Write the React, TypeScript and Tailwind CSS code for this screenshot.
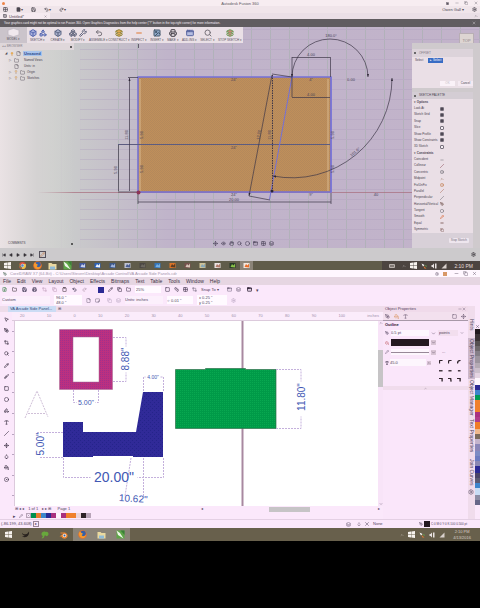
import { useState, type ReactNode } from "react";
import clsx from "clsx";
import {
  AppWindow,
  Box,
  Boxes,
  Brush,
  ChevronDown,
  ChevronUp,
  Circle,
  CircleDot,
  Clipboard,
  Copy,
  Crop,
  Droplet,
  Equal,
  Eye,
  File,
  FilePlus,
  Folder,
  Grid2x2,
  Hand,
  Image,
  Layers,
  Lightbulb,
  Minus,
  MousePointer2,
  Move,
  PaintBucket,
  PenTool,
  Pencil,
  Play,
  Printer,
  Redo2,
  Ruler,
  Save,
  Search,
  Settings,
  Shapes,
  SkipBack,
  SkipForward,
  Slash,
  Square,
  Type,
  Undo2,
  Wrench,
  X,
  type LucideIcon,
} from "lucide-react";

type Tool = { label: string; width: string; icons: LucideIcon[]; color: string };

const RIBBON: Tool[] = [
  { label: "SKETCH", width: "w-[21px]", icons: [Box, Shapes], color: "text-[#5668b0] fill-[#a8b0dc]" },
  { label: "CREATE", width: "w-[20px]", icons: [Box], color: "text-[#5c6684] fill-[#a8b0cc]" },
  { label: "MODIFY", width: "w-[20px]", icons: [Boxes, Wrench], color: "text-[#666a80]" },
  { label: "ASSEMBLE", width: "w-[21px]", icons: [Undo2], color: "text-[#77727a]" },
  { label: "CONSTRUCT", width: "w-[20px]", icons: [Layers], color: "text-[#8a8138] fill-[#e0a850]" },
  { label: "INSPECT", width: "w-[20px]", icons: [Minus], color: "text-[#e07830]" },
  { label: "INSERT", width: "w-[16px]", icons: [Image], color: "text-[#42566a] fill-[#90a8c8]" },
  { label: "MAKE", width: "w-[16px]", icons: [Printer], color: "text-[#444048]" },
  { label: "ADD-INS", width: "w-[17px]", icons: [AppWindow], color: "text-[#5a66a0] fill-[#b4bce0]" },
  { label: "SELECT", width: "w-[19px]", icons: [Search], color: "text-[#77727a]" },
  { label: "STOP SKETCH", width: "w-[26px]", icons: [Layers], color: "text-[#6a9e58] fill-[#c88878]" },
];

const OPTIONS = [
  { label: "Look At", on: true },
  { label: "Sketch Grid", on: true },
  { label: "Snap", on: true },
  { label: "Slice", on: false },
  { label: "Show Profile", on: true },
  { label: "Show Constraints", on: true },
  { label: "3D Sketch", on: false },
];

const CONSTRAINTS: { label: string; icon: LucideIcon; color: string }[] = [
  { label: "Coincident", icon: Minus, color: "text-[#6b6870]" },
  { label: "Collinear", icon: Slash, color: "text-[#8a4a58]" },
  { label: "Concentric", icon: CircleDot, color: "text-[#6b6870]" },
  { label: "Midpoint", icon: ChevronUp, color: "text-[#8a6a58]" },
  { label: "Fix/UnFix", icon: CircleDot, color: "text-[#c07848]" },
  { label: "Parallel", icon: Slash, color: "text-[#a86a58]" },
  { label: "Perpendicular", icon: Slash, color: "text-[#6b6870]" },
  { label: "Horizontal/Vertical", icon: PenTool, color: "text-[#806460]" },
  { label: "Tangent", icon: Circle, color: "text-[#6b6870]" },
  { label: "Smooth", icon: Pencil, color: "text-[#d8602c]" },
  { label: "Equal", icon: Equal, color: "text-[#8a6a68]" },
  { label: "Symmetric", icon: Copy, color: "text-[#8a6a68]" },
];

const TREE: { label: string; icon: LucideIcon; bulb: boolean; arrow: boolean }[] = [
  { label: "Named Views", icon: Folder, bulb: false, arrow: true },
  { label: "Units: in", icon: File, bulb: false, arrow: false },
  { label: "Origin", icon: Folder, bulb: true, arrow: true },
  { label: "Sketches", icon: Folder, bulb: true, arrow: true },
];

const MENUS = ["File", "Edit", "View", "Layout", "Object", "Effects", "Bitmaps", "Text", "Table", "Tools", "Window", "Help"];

const STANDARD_BAR: { icon: LucideIcon; color: string }[] = [
  { icon: FilePlus, color: "text-[#4f8a5c]" },
  { icon: Folder, color: "text-[#4a4048]" },
  { icon: Save, color: "text-[#3c3450]" },
  { icon: Printer, color: "text-[#3c3450]" },
  { icon: Crop, color: "text-[#c8a8c4]" },
  { icon: Copy, color: "text-[#c8a8c4]" },
  { icon: Clipboard, color: "text-[#50404c]" },
  { icon: Undo2, color: "text-[#3c3450]" },
  { icon: Redo2, color: "text-[#b8a0b4]" },
];

const TOOLBOX: LucideIcon[] = [
  MousePointer2, PenTool, Crop, Search, Pencil, Brush, Square, Circle, Shapes, Type, Slash, Move, Droplet, PaintBucket, CircleDot,
];

const PALETTE = [
  "bg-[#008f50]", "bg-[#e87b2e]", "bg-[#3d85cc]", "bg-[#2b2a94]", "bg-[#a93080]", "bg-[#fdf3fd]", "bg-[#a93080]",
  "bg-[#f0802c]", "bg-[#f0802c]", "bg-[#ead4dc]", "bg-[#2c2226]", "bg-[#b8a4b8]",
];

const SIDE_PALETTE = [
  "bg-[#221a1e]", "bg-[#3c3436]", "bg-[#565052]", "bg-[#6e686c]", "bg-[#857f88]", "bg-[#9c949e]", "bg-[#b4aab4]", "bg-[#ccc0cc]",
  "bg-[#e4d4e2]", "bg-[#fdf6fd]", "bg-[#2b2a94]", "bg-[#3d85cc]", "bg-[#009a56]", "bg-[#f0802c]", "bg-[#f0802c]", "bg-[#a93080]",
  "bg-[#b03c8a]", "bg-[#f07c28]", "bg-[#efb88c]", "bg-[#7c6a5a]", "bg-[#c4b4cc]", "bg-[#8a86b8]", "bg-[#7c8cc4]", "bg-[#6c7cc0]",
  "bg-[#8a88b4]", "bg-[#2b2a94]", "bg-[#4a4468]", "bg-[#5a5a74]", "bg-[#3d85cc]", "bg-[#c8dcf4]", "bg-[#8c8ca4]", "bg-[#666688]",
];

const DOCKERS = [
  { label: "Hints", height: "h-[26px]" },
  { label: "Object Properties", height: "h-[41px]" },
  { label: "Object Manager", height: "h-[38px]" },
  { label: "Text Properties", height: "h-[38px]" },
  { label: "Join Curves", height: "h-[34px]" },
];

function WindowsLogo() {
  return (
    <svg viewBox="0 0 14 14" className="size-[7px]" fill="#f6f2ee">
      <path d="M0 2l6-1v5.6H0zM6.8.9L14 0v6.6H6.8zM0 7.4h6V13l-6-1zM6.8 7.4H14V14l-7.2-1z" />
    </svg>
  );
}

function Chrome() {
  return (
    <svg viewBox="0 0 14 14" className="size-[7px]">
      <circle cx="7" cy="7" r="7" fill="#d9503c" />
      <path d="M1 4l5 9A7 7 0 0 1 1 4z" fill="#4c9a52" />
      <path d="M7 4h6.4A7 7 0 0 1 6 14z" fill="#e8c048" />
      <circle cx="7" cy="7" r="3" fill="#5088d0" stroke="#eee" />
    </svg>
  );
}

function Firefox() {
  return (
    <svg viewBox="0 0 18 18" className="size-[9px]">
      <circle cx="9" cy="9" r="8.500" fill="#e8702a" />
      <circle cx="10" cy="7" r="5.500" fill="#3560a8" />
      <path d="M2 5c2-2 4-1 5 1 2 0 3 1 2 3-2 0-2 2 0 3 3 1 5 0 7-3-1 6-5 8-8 7C3 15 1 10 2 5z" fill="#f49a30" />
    </svg>
  );
}

function FolderTile() {
  return (
    <svg viewBox="0 0 18 16" className="h-[8px] w-[9px]">
      <path d="M1 2h6l2 2h8v11H1z" fill="#ead9a0" />
      <path d="M4 9h10v6H4z" fill="#92bcd8" />
    </svg>
  );
}

function CorelIcon() {
  return (
    <svg viewBox="0 0 18 18" className="size-[9px]">
      <path d="M1 1h16v16H1z" fill="#5ea648" />
      <path d="M1 1l7 5 7 11L4 10z" fill="#eef6e8" />
      <path d="M9 1h8v9z" fill="#3b7f38" />
    </svg>
  );
}

function BlenderIcon() {
  return (
    <svg viewBox="0 0 18 16" className="h-[8px] w-[9px]">
      <path d="M1 11l8-6H3V3h9c4 2 6 5 5 8s-4 5-8 4-4-4-4-4z" fill="#ec8430" />
      <circle cx="11" cy="9" r="3.500" fill="#eee" />
      <circle cx="11" cy="9" r="2" fill="#34609c" />
    </svg>
  );
}

function Tile({ a, b }: { a: string; b: string }) {
  return (
    <svg viewBox="0 0 14 14" className="size-[7px]">
      <path d="M1 2h12v10H1z" fill={a} />
      <path d="M3 10l3-6 3 3 3-4v8z" fill={b} />
    </svg>
  );
}

function TaskButton({ label, active, className, children }: { label: string; active?: boolean; className: string; children: ReactNode }) {
  return (
    <button aria-label={label} className={clsx("flex h-full items-center justify-center", className, active && "bg-[#8b8478]")}>
      {children}
    </button>
  );
}

function Tray() {
  return (
    <div className="flex items-center gap-[4px] text-[#f4eeee]">
      <ChevronUp className="size-[4px]" />
      <WindowsLogo />
      <svg viewBox="0 0 12 12" className="size-[6px]">
        <path d="M1 1l6 3-3 3z" fill="#fff" />
        <path d="M5 6l6 5H7z" fill="#e87b2e" />
        <path d="M7 5h4v3z" fill="#6ab04c" />
      </svg>
      <svg viewBox="0 0 12 12" className="size-[6px]" fill="#e8e2e2">
        <path d="M1 4h2l3-3v10L3 8H1zM8 1h3v10H8z" />
      </svg>
      <svg viewBox="0 0 12 12" className="size-[6px]" fill="#d8d0cc">
        <path d="M1 11L11 1v10z" />
      </svg>
    </div>
  );
}

function SketchView() {
  const verticals = Array.from({ length: 25 }, (_, i) => 42 + i * 19);
  const rows = Array.from({ length: 24 }, (_, i) => 29 + i * 10);
  return (
    <svg
      viewBox="0 27 480 221"
      preserveAspectRatio="xMidYMid slice"
      className="absolute inset-0 h-full w-full"
      fontFamily="Liberation Sans, sans-serif"
      fontSize="4"
      fill="#4a4258"
    >
      <defs>
        <linearGradient id="haze" x1="0" x2="1">
          <stop offset="0" stopColor="#dcd8d8" />
          <stop offset="0.100" stopColor="#ccd0cc" />
          <stop offset="0.220" stopColor="#c6c2ca" />
          <stop offset="0.350" stopColor="#c0b4ca" />
          <stop offset="1" stopColor="#c2b3ca" />
        </linearGradient>
        <pattern id="tan" width="2" height="2" patternUnits="userSpaceOnUse">
          <path d="M0 0h2v2H0z" fill="#c08f5a" />
          <path d="M0 0h1v1H0zM1 1h1v1H1z" fill="#b4895c" />
        </pattern>
        <marker id="tip" viewBox="0 0 6 4" refX="6" refY="2" markerWidth="5" markerHeight="3" orient="auto-start-reverse">
          <path d="M0 0l6 2-6 2z" fill="#2c2634" />
        </marker>
      </defs>
      <rect y="27" width="480" height="221" fill="url(#haze)" />
      <g strokeWidth="1" opacity="0.350">
        {verticals.map((x) => (
          <path key={x} d={`M${x + 0.5} 27v221`} stroke={x < 110 ? "#c8c4cc" : "#94b09a"} />
        ))}
        {rows.map((y) => (
          <path key={y} d={`M80 ${y + 0.5}h400`} stroke="#ae9fbe" />
        ))}
      </g>
      <path d="M0 192.500h480" stroke="#a86c7c" strokeWidth="1" opacity="0.700" />
      <path d="M138 77h193v115H138z" fill="url(#tan)" stroke="#7470d8" strokeWidth="1.500" />
      <path d="M140 79v112M328 79v112" stroke="#d8b78c" strokeWidth="1" />
      <path d="M118 144.500h212" stroke="#5c5c80" strokeWidth="1" />
      <path d="M292 77L269.500 199.500M331 77v115" stroke="#7470d8" strokeWidth="1" fill="none" />
      <g stroke="#3e3648" strokeWidth="0.700" fill="none">
        <path d="M128 77.500h10M118 192h20M292 57v40M330.500 57v20M272 74l20 3M249 196l21 4" />
        <path d="M129.500 78v113M118.500 145v46M138 202h193M292 57.500h38M292 97.500h38M272 75l-23 121" markerStart="url(#tip)" markerEnd="url(#tip)" />
        <path d="M272.500 75v117" strokeWidth="1" strokeDasharray="1.500 1" />
        <path d="M292 77a38 38 0 0 1 76 0" markerStart="url(#tip)" markerEnd="url(#tip)" />
        <path d="M273 176a100 100 0 0 0 119-98" markerStart="url(#tip)" markerEnd="url(#tip)" />
        <path d="M138 193v11M331 193v11M138.500 44v4" />
      </g>
      <g textAnchor="middle">
        <text x="331" y="37">180.0°</text>
        <text x="311" y="56">4.00</text>
        <text x="311" y="96">4.00</text>
        <text x="234" y="81">24"</text>
        <text x="311" y="81">4"</text>
        <text x="351" y="81">0.00</text>
        <text x="234" y="149">24"</text>
        <text x="234" y="196">24"</text>
        <text x="234" y="201">20.00</text>
        <text x="311" y="196">9"</text>
        <text x="376" y="196">40</text>
        <text x="128" y="135" transform="rotate(-90 128 135)">11.80</text>
        <text x="117" y="170" transform="rotate(-90 117 170)">5.90</text>
        <text x="143" y="135" transform="rotate(-90 143 135)">5.90</text>
        <text x="143" y="169" transform="rotate(-90 143 169)">5.90</text>
        <text x="334" y="135" transform="rotate(-90 334 135)">5.90</text>
        <text x="334" y="169" transform="rotate(-90 334 169)">5.90</text>
        <text x="260" y="135" transform="rotate(-80 260 135)">12.00</text>
        <text x="271" y="135" transform="rotate(-90 271 135)">11.80</text>
        <text x="356" y="153" transform="rotate(-40 356 153)">101.6°</text>
      </g>
      <circle cx="138.500" cy="192.500" r="2" fill="#8c3458" />
      <circle cx="272" cy="191" r="1.500" fill="#2c2634" />
    </svg>
  );
}

function SketchPalette() {
  const [options, setOptions] = useState(OPTIONS);

  const toggle = (label: string) => {
    setOptions((prev) => prev.map((o) => (o.label === label ? { ...o, on: !o.on } : o)));
  };

  return (
    <section className="mt-[4px] flex flex-1 flex-col bg-[#eadfe6] text-[#48424e]">
      <h2 className="flex h-[7px] items-center gap-[3px] bg-[#d4cdd4] px-[2px]">
        <span className="size-[2px] rounded-full bg-[#444]" />
        SKETCH PALETTE
      </h2>
      <div className="flex flex-1 flex-col px-[2px]">
        <h3 className="flex flex-1 items-center font-bold">▾ Options</h3>
        {options.map((o) => (
          <label key={o.label} className="flex flex-1 items-center">
            <span className="w-[26px] whitespace-nowrap">{o.label}</span>
            <input
              type="checkbox"
              checked={o.on}
              onChange={() => toggle(o.label)}
              className="size-[4px] appearance-none rounded-[1px] border border-[#77717c] bg-[#f4eef4] checked:bg-[#4e4854]"
            />
          </label>
        ))}
        <h3 className="flex flex-1 items-center font-bold">▾ Constraints</h3>
        {CONSTRAINTS.map(({ label, icon: Icon, color }) => (
          <button key={label} className="flex flex-1 items-center text-left">
            <span className="w-[26px] whitespace-nowrap">{label}</span>
            <Icon className={clsx("size-[4px]", color)} strokeWidth={3} />
          </button>
        ))}
      </div>
      <div className="flex h-[15px] items-center justify-end bg-[#d8d0d8] px-[4px]">
        <button className="rounded-[1px] bg-[#eee6ee] px-[2px] text-[#77707c]">Stop Sketch</button>
      </div>
    </section>
  );
}

function FusionWindow() {
  return (
    <section className="flex flex-col font-['Liberation_Sans',sans-serif] text-[4px] leading-[5px]">
      <header className="flex h-[6px] items-center bg-[#f7edf1] text-[#5c5660]">
        <div className="w-[36px] px-[2px]">
          <span className="block size-[3px] rounded-full bg-[#ee8448]" />
        </div>
        <h1 className="flex-1 text-center">Autodesk Fusion 360</h1>
        <div className="flex w-[36px] items-center justify-between px-[2px]">
          <Square className="size-[3px] fill-current" />
          <Minus className="size-[4px]" />
          <Copy className="size-[4px]" />
          <X className="size-[4px]" />
        </div>
      </header>
      <div className="flex h-[7px] items-center gap-[8px] bg-[#f0e5ea] px-[3px] text-[#4b4650]">
        <Grid2x2 className="size-[5px]" strokeWidth={3} />
        <span className="flex items-center">
          <File className="size-[5px] fill-current" />▾
        </span>
        <Save className="size-[5px]" strokeWidth={3} />
        <span className="flex items-center">
          <Undo2 className="size-[5px]" strokeWidth={3} />▾
        </span>
        <span className="flex items-center">
          <Redo2 className="size-[5px]" strokeWidth={3} />▾
        </span>
        <button className="ml-auto">Owen Gall ▾</button>
        <Settings className="size-[5px]" strokeWidth={3} />
      </div>
      <div className="flex h-[6px] items-center bg-[#eadfe6] text-[#4b4650]">
        <div className="flex h-full w-[50px] items-center gap-[2px] bg-[#f5eaf0] px-[3px]">
          <Grid2x2 className="size-[4px]" strokeWidth={3} />
          Untitled*
          <X className="ml-auto size-[3px]" />
        </div>
        <ChevronUp className="mr-[2px] ml-auto size-[4px]" />
      </div>
      <p className="flex h-[8px] items-center justify-between overflow-hidden bg-[#605c60] px-[4px] text-[3px] whitespace-nowrap text-[#f4ecf4]">
        Your graphics card might not be optimal to run Fusion 360. Open Graphics Diagnostics from the help center (&quot;?&quot; button in the top-right corner) for more information.
        <X className="size-[4px]" />
      </p>

      <div className="relative flex h-[221px] flex-col overflow-hidden">
        <SketchView />
        <nav className="relative flex h-[16px] w-[243px] bg-[#eae0e6] text-[#55505c]">
          <button className="flex w-[27px] flex-col items-center justify-between bg-[#cbc4cb] py-px">
            <svg viewBox="0 0 28 20" className="h-[9px] w-[13px]">
              <path d="M2 5l12-4 12 4v10l-12 4-12-4z" fill="#f0e8ee" stroke="#b4acb8" />
            </svg>
            <span className="text-[3px] leading-[5px]">MODEL ▾</span>
          </button>
          {RIBBON.map((t) => (
            <button key={t.label} className={clsx("flex flex-col items-center justify-between pt-[2px] whitespace-nowrap", t.width)}>
              <span className="flex gap-[2px]">
                {t.icons.map((Icon, i) => (
                  <Icon key={i} className={clsx("size-[8px]", t.color)} strokeWidth={3} />
                ))}
              </span>
              <span className="text-[3px] leading-[5px]">{t.label} ▾</span>
            </button>
          ))}
        </nav>
        <button className="absolute top-[6px] right-[6px] h-[14px] w-[15px] border border-[#b8aeb4] bg-[#ddd5d2] text-[#8c8488]">TOP</button>

        <div className="relative flex flex-1 justify-between">
          <aside className="flex w-[74px] flex-col bg-linear-to-r from-[#eae2e4] via-[#d4d2d2] to-[#cccacc]/0 text-[3px] text-[#48424e]">
            <h2 className="flex h-[7px] items-center gap-[3px] bg-[#dfd7da] px-[2px] text-[#847d88]">
              ◂◂ BROWSER
              <span className="ml-auto size-[2px] rounded-full bg-[#333]" />
            </h2>
            <ul>
              <li className="flex h-[7px] items-center gap-[2px] pl-[5px]">
                <span className="w-[3px]">◢</span>
                <Lightbulb className="size-[4px] fill-[#ecae50] text-[#d89848]" />
                <File className="size-[5px]" />
                <span className="bg-[#a8c4ec] px-px text-[4px] font-bold text-[#284888]">Unsaved</span>
              </li>
              {TREE.map((t) => (
                <li key={t.label} className="flex h-[6px] items-center gap-[2px] pl-[9px]">
                  <span className="w-[3px]">{t.arrow && "▷"}</span>
                  {t.bulb && <Lightbulb className="size-[4px] fill-[#ecc890] text-[#b09080]" />}
                  <t.icon className="size-[5px]" />
                  <span className={clsx(!t.bulb && "pl-[3px]")}>{t.label}</span>
                </li>
              ))}
            </ul>
            <p className="mt-auto flex h-[9px] items-center justify-between pr-px pl-[8px]">
              COMMENTS
              <span className="size-[2px] rounded-full bg-[#333]" />
            </p>
          </aside>

          <div className="flex items-end gap-[3px] pb-[2px] text-[#514a60]">
            {[Move, Eye, Hand, Search, Circle, AppWindow, Grid2x2, Layers].map((Icon, i) => (
              <Icon key={i} className="size-[5px]" strokeWidth={3} />
            ))}
          </div>

          <aside className="flex w-[68px] flex-col bg-[#cfcacd] pt-[6px] pr-[7px] text-[3px]">
            <section className="flex h-[39px] flex-col bg-[#eadfe6] text-[#48424e]">
              <h2 className="flex h-[8px] items-center gap-[3px] bg-[#dcd3da] px-[2px] text-[#807884]">
                <span className="size-[2px] rounded-full bg-[#444]" />
                OFFSET
              </h2>
              <div className="flex items-center gap-[5px] px-[3px] pt-px">
                <span>Select</span>
                <button className="flex h-[5px] w-[15px] items-center justify-center bg-[#386cc4] text-white">▸ Select</button>
              </div>
              <div className="mt-auto flex justify-end gap-[3px] pb-[2px]">
                <button className="w-[15px] bg-[#faf2f8] text-[#c4bcc4]">OK</button>
                <button className="w-[15px] bg-[#f4eaf2]">Cancel</button>
              </div>
            </section>
            <SketchPalette />
          </aside>
        </div>
      </div>

      <footer className="flex h-[13px] items-center gap-[3px] bg-[#cccacc] px-[2px] text-[#38343a]">
        <SkipBack className="size-[4px] fill-current" />
        <Play className="size-[4px] rotate-180 fill-current" />
        <Play className="size-[4px] fill-current" />
        <Play className="size-[4px] fill-current" />
        <SkipForward className="size-[4px] fill-current" />
        <span className="ml-[2px] flex size-[7px] items-center justify-center border border-[#55505a]">
          <Pencil className="size-[5px] text-[#c87840]" />
        </span>
        <Settings className="mr-[2px] ml-auto size-[5px]" strokeWidth={3} />
      </footer>
    </section>
  );
}

const TASKS: { label: string; icon: ReactNode }[] = [
  { label: "Start", icon: <WindowsLogo /> },
  { label: "Chrome", icon: <Chrome /> },
  { label: "Firefox", icon: <Firefox /> },
  { label: "Explorer", icon: <FolderTile /> },
  { label: "CorelDRAW", icon: <CorelIcon /> },
  { label: "Mail", icon: <Tile a="#4058a0" b="#c8d0ec" /> },
  { label: "Store", icon: <Tile a="#2c60b4" b="#eef4fc" /> },
  { label: "Word", icon: <Tile a="#3c5888" b="#a0b4dc" /> },
  { label: "Photos", icon: <Tile a="#c0c4d4" b="#485c90" /> },
  { label: "Terminal", icon: <Tile a="#4c4844" b="#6c6860" /> },
  { label: "Outlook", icon: <Tile a="#3474b8" b="#78b0e0" /> },
  { label: "Blender", icon: <Tile a="#dc7428" b="#5c3c24" /> },
  { label: "Player", icon: <Tile a="#74504c" b="#d8c4b8" /> },
  { label: "Notes", icon: <Tile a="#d0c498" b="#88a8b8" /> },
  { label: "Paint", icon: <Tile a="#ece4e4" b="#b07868" /> },
  { label: "Excel", icon: <Tile a="#283828" b="#88c048" /> },
];

function TopTaskbar() {
  return (
    <div className="flex h-[9px] items-center bg-[#605c4a] font-['Liberation_Sans',sans-serif]">
      {TASKS.map((t) => (
        <TaskButton key={t.label} label={t.label} className="w-[15px]">
          {t.icon}
        </TaskButton>
      ))}
      <TaskButton label="Fusion 360" className="w-[13px]" active>
        <Tile a="#f2e8e0" b="#e86c28" />
      </TaskButton>
      <div className="ml-auto flex h-full items-center gap-[7px] bg-[#4c4440] px-[7px] text-[5px] leading-[6px] text-[#e8dfdc]">
        <svg viewBox="0 0 12 8" className="h-[4px] w-[6px]" fill="none" stroke="#b8b0ac" strokeWidth="2">
          <path d="M1 1h10v6H1zM1 4h10" />
        </svg>
        <Tray />
        2:10 PM
      </div>
    </div>
  );
}

function Drawing() {
  return (
    <svg
      viewBox="15 321 363 185"
      className="h-[185px] min-w-0 flex-1 bg-white"
      preserveAspectRatio="xMidYMid slice"
      fontFamily="Liberation Sans, sans-serif"
      fontSize="10"
      fill="#4258b4"
    >
      <defs>
        <pattern id="magenta" width="2" height="2" patternUnits="userSpaceOnUse">
          <path d="M0 0h2v2H0z" fill="#bc3080" />
          <path d="M0 0h1v1H0z" fill="#a0308c" />
        </pattern>
        <pattern id="navy" width="4" height="4" patternUnits="userSpaceOnUse">
          <path d="M0 0h4v4H0z" fill="#302a98" />
          <path d="M0 0h1v1H0zM2 2h1v1H2z" fill="#24248a" />
        </pattern>
        <pattern id="green" width="2" height="2" patternUnits="userSpaceOnUse">
          <path d="M0 0h2v2H0z" fill="#009a48" />
          <path d="M0 0h1v1H0z" fill="#08a850" />
        </pattern>
      </defs>
      <path d="M242.500 321v185" stroke="#a888a0" strokeWidth="2" />
      <path d="M59.500 329.500h53v60h-53zM73 337v45h26v-45z" fill="url(#magenta)" fillRule="evenodd" stroke="#a86890" strokeWidth="0.500" />
      <path d="M63 422h20v10h53l7-40h20v65h-30v-1H93v1H63z" fill="url(#navy)" />
      <path d="M175.500 369.500h30v-1h40v1h30.500v59H175.500z" fill="url(#green)" stroke="#30704c" strokeWidth="0.700" />
      <g stroke="#c4b0dc" strokeWidth="1" strokeDasharray="2 1" fill="none">
        <path d="M113 337.500h13v9M113 381.500h13v-9M73.500 390v12.500h3M98.500 390v12.500h-3" />
        <path d="M143.500 391v-14h2M163.500 391v-14h-3M63 432.500H37M63 457.500H40" />
        <path d="M63.500 458v19.500h27M163.500 458v19.500h-26M143.500 458v39M131 458l-6 38" />
        <path d="M276 369.500h25v12M276 428.500h25v-12" />
        <path d="M25 418l12-27 11 26M28 413.500h18" stroke="#d0c0d8" />
      </g>
      <g textAnchor="middle">
        <text x="129" y="359" transform="rotate(-90 129 359)">8.88&quot;</text>
        <text x="86" y="405" fontSize="7">5.00&quot;</text>
        <text x="153" y="379" fontSize="5">4.00&quot;</text>
        <text x="44" y="444" transform="rotate(-90 44 444)">5.00&quot;</text>
        <text x="114" y="482" fontSize="14">20.00&quot;</text>
        <text x="133" y="502" transform="rotate(4 133 502)">10.62&quot;</text>
        <text x="305" y="397" transform="rotate(-90 305 397)">11.80&quot;</text>
      </g>
    </svg>
  );
}

function ObjectProperties() {
  return (
    <aside className="flex w-[85px] flex-col bg-[#fae6fa] text-[4px] leading-[6px] text-[#50405a]">
      <h2 className="flex h-[6px] items-center bg-[#f0daea] px-[2px]">
        Object Properties
        <Minus className="ml-auto size-[4px]" />
        <X className="size-[4px]" />
      </h2>
      <div className="flex h-[9px] items-center gap-[4px] border-b border-[#a898a8] bg-[#f3e0ee] px-[2px]">
        <PenTool className="size-[5px]" />
        <PaintBucket className="size-[5px] text-[#d88848]" />
        <Type className="size-[5px]" />
        <Square className="ml-auto size-[5px]" />
        <Move className="size-[5px]" />
      </div>
      <h3 className="flex h-[7px] items-center px-[2px] font-bold text-[#2c2030]">Outline</h3>
      <div className="flex flex-col gap-[3px] px-[2px] pt-[2px]">
        <div className="flex items-center gap-[2px]">
          <PenTool className="size-[4px]" />
          <select aria-label="Width" className="h-[6px] w-[38px] appearance-none bg-[#fdf6fd]">
            <option>0.5 pt</option>
          </select>
          <ChevronDown className="size-[5px]" />
          <select aria-label="Units" className="h-[6px] w-[20px] appearance-none bg-[#f2deee] px-px">
            <option>points</option>
          </select>
          <ChevronDown className="size-[4px]" />
        </div>
        <div className="flex items-center gap-[2px]">
          <PaintBucket className="size-[4px] text-[#c05058]" />
          <button aria-label="Outline color" className="h-[7px] w-[38px] bg-[#241820]" />
          <ChevronDown className="size-[5px] bg-[#d8c4d4]" />
        </div>
        <div className="flex items-center gap-[2px]">
          <Pencil className="size-[4px]" />
          <button aria-label="Line style" className="flex h-[6px] w-[38px] items-center bg-[#fdf6fd]">
            <span className="h-px w-full bg-[#988898]" />
          </button>
          <ChevronDown className="size-[5px] bg-[#d8c4d4]" />
          <span className="pl-[4px]">...</span>
        </div>
      </div>
      <div className="flex items-start gap-[8px] px-[2px] pt-[4px]">
        <label className="flex items-center gap-px">
          <Type className="size-[4px]" strokeWidth={4} />
          <input aria-label="Miter limit" defaultValue="45.0" className="h-[7px] w-[36px] bg-[#fdf6fd]" />
          <ChevronUp className="size-[4px] bg-[#d8c4d4]" />
        </label>
        <div className="grid grid-cols-3 gap-x-[5px] gap-y-[5px] pt-px">
          {["M1 8V3q0-2 2-2h5", "M1 8V3l2-2h5", "M1 8q0-7 7-7", "M0 4h8", "M1 4h7", "M2 4h6", "M0 1h7v7", "M0 1h6l1 7", "M0 1h7v7"].map((d, i) => (
            <svg key={i} viewBox="0 0 9 9" className="size-[4px]" fill="none" stroke="#30242c" strokeWidth="3">
              <path d={d} />
            </svg>
          ))}
        </div>
      </div>
      <div className="mt-[4px] flex h-[4px] items-center justify-center bg-[#f0dcec]">
        <ChevronUp className="size-[3px]" />
      </div>
    </aside>
  );
}

function CorelWindow() {
  const [open, setOpen] = useState("Object Properties");

  return (
    <section className="flex flex-col bg-[#fbe8fb] font-['Liberation_Sans',sans-serif] text-[5px] leading-[6px] text-[#51445c]">
      <header className="flex h-[7px] items-center gap-[3px] bg-[#fff7ff] px-[3px] text-[4px] text-[#a494ac]">
        <PenTool className="size-[4px] text-[#446050]" />
        <h1>CorelDRAW X7 (64-Bit) - C:\Users\Steven\Desktop\Arcade Control\VA Arcade Side Panels.cdr</h1>
        <div className="ml-auto flex items-center gap-[4px] text-[#5c5064]">
          <Settings className="size-[4px]" />
          <span className="size-[4px] bg-[#d89868]" />
          <Minus className="ml-[3px] size-[5px]" />
          <Copy className="size-[5px]" />
          <X className="size-[5px]" />
        </div>
      </header>
      <nav className="flex h-[8px] items-center gap-[6px] bg-[#e6d6e2] px-[3px] text-[#3c3044]">
        {MENUS.map((m) => (
          <button key={m}>{m}</button>
        ))}
      </nav>
      <div className="flex h-[9px] items-center gap-[4px] px-[2px]">
        {STANDARD_BAR.map(({ icon: Icon, color }, i) => (
          <Icon key={i} className={clsx("mr-px size-[5px]", color)} strokeWidth={3} />
        ))}
        <span className="ml-[6px] size-[6px] bg-[#2b2a94]" />
        <Pencil className="size-[5px]" strokeWidth={3} />
        <Copy className="size-[5px]" strokeWidth={3} />
        <Folder className="size-[5px]" strokeWidth={3} />
        <select aria-label="Zoom" className="h-[7px] w-[26px] appearance-none bg-[#fffaff] px-px text-[4px]">
          <option>25%</option>
        </select>
        <Square className="size-[5px]" strokeWidth={3} />
        <Ruler className="size-[5px]" strokeWidth={3} />
        <Grid2x2 className="size-[5px]" strokeWidth={3} />
        <Crop className="size-[5px]" />
        <button className="text-[4px]">Snap To ▾</button>
        <AppWindow className="ml-[4px] size-[5px]" />
        <Layers className="size-[5px]" />
        <AppWindow className="ml-[2px] size-[5px] text-[#302438]" strokeWidth={4} />▾
      </div>
      <div className="flex h-[12px] items-center gap-[4px] px-[2px] text-[4px]">
        <select aria-label="Page size" className="h-[8px] w-[48px] appearance-none bg-[#fcf0fc]">
          <option>Custom</option>
        </select>
        <div className="flex w-[28px] flex-col bg-[#fffaff]">
          <input aria-label="Page width" defaultValue='96.0 "' className="h-[5px] w-full px-[2px]" />
          <input aria-label="Page height" defaultValue='48.0 "' className="h-[5px] w-full px-[2px]" />
        </div>
        <File className="size-[5px]" />
        <File className="size-[5px] rotate-90" />
        <Copy className="ml-[3px] size-[5px] text-[#b09cb8]" />
        <Layers className="size-[5px] text-[#b09cb8]" />
        <select aria-label="Drawing units" className="h-[8px] w-[38px] appearance-none bg-[#fcf0fc]">
          <option>Units: inches</option>
        </select>
        <input aria-label="Nudge" defaultValue='⟡ 0.01 "' className="h-[8px] w-[26px] bg-[#fffaff]" />
        <div className="flex w-[30px] flex-col bg-[#fffaff]">
          <input aria-label="Duplicate x" defaultValue='x 0.25 "' className="h-[5px] w-full px-[2px]" />
          <input aria-label="Duplicate y" defaultValue='y 0.25 "' className="h-[5px] w-full px-[2px]" />
        </div>
        <Settings className="size-[5px] text-[#b09cb8]" />
      </div>

      <div className="flex">
        <div className="flex min-w-0 flex-1 flex-col">
          <div className="flex h-[6px] items-center bg-[#eedcea] pl-[8px] text-[4px]">
            <div className="flex h-full w-[48px] items-center bg-[#ccdcf4] px-[2px] whitespace-nowrap text-[#304474]">VA Arcade Side Panel...</div>
            <span className="pl-[2px]">⊞</span>
          </div>
          <div className="flex">
            <nav className="flex w-[12px] flex-col items-center justify-between pt-[5px] pb-[30px] text-[#44384c]">
              {TOOLBOX.map((Icon, i) => (
                <Icon key={i} className="size-[5px]" strokeWidth={3} />
              ))}
            </nav>
            <div className="flex min-w-0 flex-1 flex-col">
              <div className="flex h-[9px] items-center justify-between border-b border-[#dccadc] bg-[#fbecfb] pr-[4px] pl-[8px] text-[4px] text-[#a090ac]">
                {[20, 10, 0, 10, 20, 30, 40, 50, 60, 70, 80, 90, 100].map((n, i) => (
                  <span key={i}>{n}</span>
                ))}
                <span>inches</span>
              </div>
              <div className="flex">
                <div className="flex w-[3px] flex-col justify-around overflow-hidden border-r border-[#dccadc]">
                  {Array.from({ length: 9 }, (_, i) => (
                    <span key={i} className="h-px w-full bg-[#b8a4c0]" />
                  ))}
                </div>
                <Drawing />
                <div className="flex w-[5px] flex-col items-center justify-between bg-[#f8e4f8]">
                  <ChevronUp className="size-[4px]" />
                  <span className="mb-[90px] h-[37px] w-full bg-[#c6c4c6]" />
                  <ChevronDown className="size-[4px]" />
                </div>
              </div>
              <div className="flex h-[6px] items-center gap-[4px] px-[3px] text-[4px] whitespace-nowrap">
                <span>⊞ ◂ ◂</span>
                <span>1 of 1</span>
                <span>▸ ▸ ⊞</span>
                <span className="pl-[2px]">Page 1</span>
                <span className="ml-auto pr-[62px]">◂</span>
                <span className="mr-[64px] h-[5px] w-[41px] bg-[#c6c4c6]" />
                <span>▸</span>
              </div>
            </div>
          </div>
          <div className="flex h-[7px] items-center pl-[13px]">
            <span className="w-[6px]">▸</span>
            <Pencil className="mr-[3px] size-[4px]" />
            <X className="size-[5px] border border-[#b8a4b8]" />
            {PALETTE.map((c, i) => (
              <button key={i} aria-label={`Color ${i + 1}`} className={clsx("size-[5px]", c)} />
            ))}
          </div>
        </div>
        <ObjectProperties />
        <nav className="flex w-[7px] flex-col bg-[#f0dcec] pt-[6px] text-[5px] leading-[7px]">
          {DOCKERS.map((d) => (
            <button
              key={d.label}
              onClick={() => setOpen(d.label)}
              className={clsx("flex items-center justify-center whitespace-nowrap [writing-mode:vertical-rl]", d.height, open === d.label && "bg-[#ccb8cc]")}
            >
              {d.label}
            </button>
          ))}
          <Settings className="size-[6px]" />
        </nav>
        <div className="flex w-[5px] flex-col pt-[18px]">
          <X className="size-[5px]" />
          {SIDE_PALETTE.map((c, i) => (
            <button key={i} aria-label={`Swatch ${i + 1}`} className={clsx("w-full", c, i % 4 === 1 ? "h-[7px]" : "h-[5px]")} />
          ))}
        </div>
      </div>

      <footer className="flex h-[9px] items-center border-t border-[#e4d0e4] px-px text-[4px]">
        <span>(-86.199, 43.608)</span>
        <span className="ml-px border border-[#988498] px-px leading-[4px]">▸</span>
        <span className="ml-auto flex w-[73px] items-center gap-[3px]">
          <Layers className="size-[5px]" />
          <Droplet className="ml-[3px] size-[4px]" />
          <X className="size-[6px]" /> None
        </span>
        <span className="flex items-center gap-px pr-[12px]">
          <PenTool className="size-[4px]" />
          <span className="size-[6px] bg-[#241820]" />
          <span className="text-[3px]">C:0 M:0 Y:0 K:100 0.500 pt</span>
        </span>
      </footer>
    </section>
  );
}

function BottomTaskbar() {
  return (
    <div className="flex h-[13px] items-center bg-[#68604c] font-['Liberation_Sans',sans-serif]">
      <TaskButton label="Start menu" className="w-[16px]">
        <WindowsLogo />
      </TaskButton>
      <TaskButton label="Inkscape" className="w-[19px]">
        <svg viewBox="0 0 18 16" className="h-[7px] w-[9px]" fill="#28221e">
          <path d="M1 4c4 6 8 3 12 2l4-5c1 5-1 9-5 12-4 2-8 1-11-1 3 0 5 0 6-2-4 0-6-3-6-6z" />
        </svg>
      </TaskButton>
      <TaskButton label="Grasshopper" className="w-[19px]">
        <svg viewBox="0 0 18 16" className="h-[8px] w-[9px]" fill="#68a83c">
          <path d="M3 6c0-4 5-6 8-4 3-1 6 1 6 4s-3 5-5 4l-2-2-3 6-4 1 3-5c-2 0-3-2-3-4z" />
        </svg>
      </TaskButton>
      <TaskButton label="Blender 3D" className="w-[19px]">
        <BlenderIcon />
      </TaskButton>
      <TaskButton label="Firefox window" className="w-[19px]" active>
        <Firefox />
      </TaskButton>
      <TaskButton label="Explorer window" className="w-[19px]" active>
        <FolderTile />
      </TaskButton>
      <TaskButton label="CorelDRAW window" className="w-[19px]" active>
        <CorelIcon />
      </TaskButton>
      <div className="ml-auto flex items-center gap-[8px] pr-[9px] text-[4px] leading-[6px] text-[#d8ccc8]">
        <Tray />
        <div className="text-center">
          <p>2:10 PM</p>
          <p>4/13/2016</p>
        </div>
      </div>
    </div>
  );
}

export default function App() {
  return (
    <main className="flex min-h-screen w-full flex-col bg-black">
      <FusionWindow />
      <TopTaskbar />
      <CorelWindow />
      <BottomTaskbar />
    </main>
  );
}
